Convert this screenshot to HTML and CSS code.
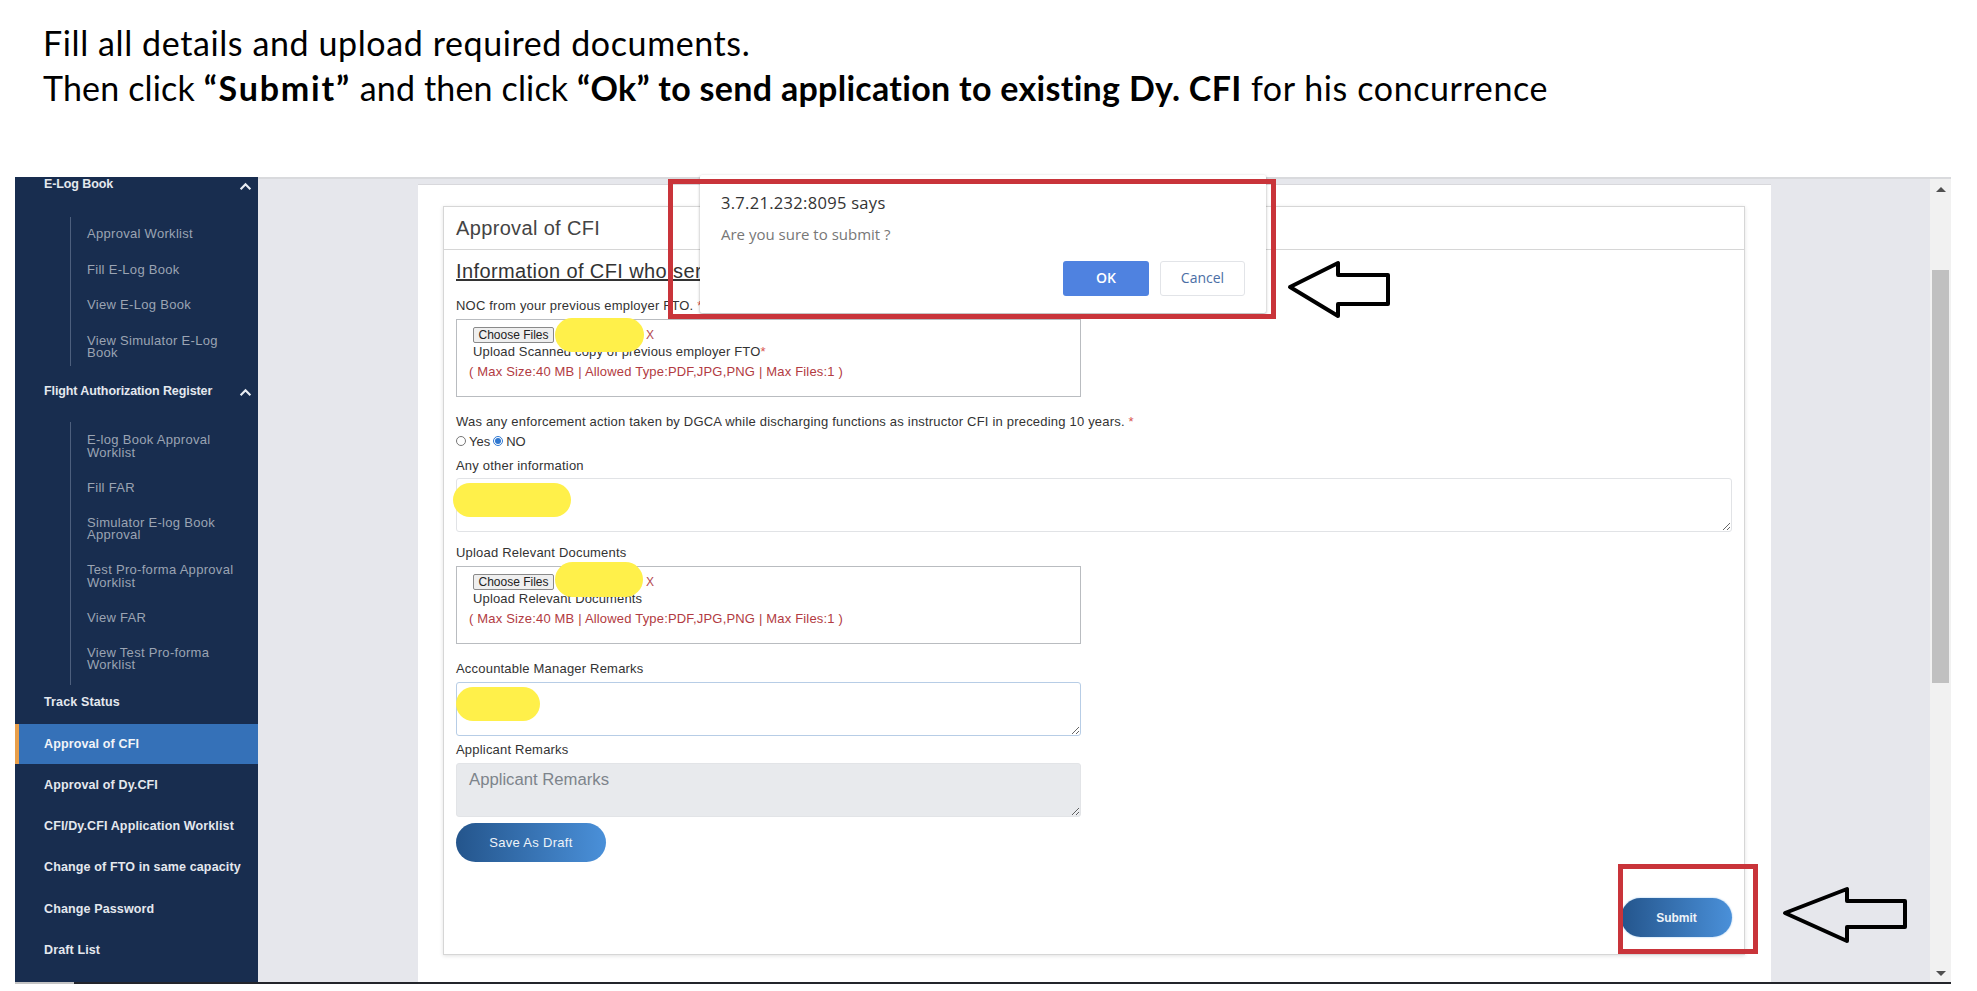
FILE: index.html
```html
<!DOCTYPE html>
<html lang="en">
<head>
<meta charset="utf-8">
<title>Approval of CFI</title>
<link rel="stylesheet" href="styles.css">
</head>
<body>
<div class="page">
  <header class="intro">
    <p>Fill all details and upload required documents.</p>
    <p><span class="then">Then click </span><b class="word">“Submit”</b><span class="then"> and then click </span><b class="phrase">“Ok” to send application to existing Dy. CFI</b> for his concurrence</p>
  </header>

  <div class="shot">
    <nav class="sidebar">
      <div class="top group first">E-Log Book <svg class="chev" viewBox="0 0 12 8"><path d="M1.5 6.5 6 2l4.5 4.5"/></svg></div>
      <ul class="sub s1">
        <li>Approval Worklist</li>
        <li>Fill E-Log Book</li>
        <li>View E-Log Book</li>
        <li>View Simulator E-Log Book</li>
      </ul>
      <div class="top group">Flight Authorization Register <svg class="chev" viewBox="0 0 12 8"><path d="M1.5 6.5 6 2l4.5 4.5"/></svg></div>
      <ul class="sub s2">
        <li>E-log Book Approval Worklist</li>
        <li>Fill FAR</li>
        <li>Simulator E-log Book Approval</li>
        <li>Test Pro-forma Approval Worklist</li>
        <li>View FAR</li>
        <li>View Test Pro-forma Worklist</li>
      </ul>
      <div class="top track">Track Status</div>
      <div class="top active">Approval of CFI</div>
      <div class="top">Approval of Dy.CFI</div>
      <div class="top">CFI/Dy.CFI Application Worklist</div>
      <div class="top">Change of FTO in same capacity</div>
      <div class="top">Change Password</div>
      <div class="top">Draft List</div>
    </nav>

    <main class="main">
      <div class="card">
        <section class="panel">
          <h2 class="panel-title">Approval of CFI</h2>
          <div class="panel-body">
            <h3 class="info">Information of CFI who served</h3>

            <label class="lbl g15">NOC from your previous employer FTO. <span class="req">*</span></label>
            <div class="filebox g6">
              <div class="fileline"><button class="choose" type="button">Choose Files</button><span class="x">X</span></div>
              <div class="hint">Upload Scanned copy of previous employer FTO<span class="req">*</span></div>
              <div class="limits">( Max Size:40 MB | Allowed Type:PDF,JPG,PNG | Max Files:1 )</div>
            </div>

            <label class="lbl g16">Was any enforcement action taken by DGCA while discharging functions as instructor CFI in preceding 10 years. <span class="req">*</span></label>
            <div class="radios g4">
              <input type="radio" name="enf" aria-label="Yes"><span>Yes</span>
              <input type="radio" name="enf" aria-label="NO" checked><span>NO</span>
            </div>

            <label class="lbl g8">Any other information</label>
            <textarea class="area wide g5" aria-label="Any other information"></textarea>

            <label class="lbl g12">Upload Relevant Documents</label>
            <div class="filebox g6">
              <div class="fileline"><button class="choose" type="button">Choose Files</button><span class="x">X</span></div>
              <div class="hint">Upload Relevant Documents</div>
              <div class="limits">( Max Size:40 MB | Allowed Type:PDF,JPG,PNG | Max Files:1 )</div>
            </div>

            <label class="lbl g16">Accountable Manager Remarks</label>
            <textarea class="area half focus g6" aria-label="Accountable Manager Remarks"></textarea>

            <label class="lbl g5">Applicant Remarks</label>
            <textarea class="area half off g6" placeholder="Applicant Remarks" disabled></textarea>

            <button class="pill draft" type="button">Save As Draft</button>
            <div class="submit-row"><button class="pill submit" type="button">Submit</button></div>
          </div>
        </section>
      </div>
    </main>

    <aside class="scroll">
      <span class="tri up"></span>
      <span class="thumb"></span>
      <span class="tri down"></span>
    </aside>
  </div>

  <div class="blob b1"></div>
  <div class="blob b2"></div>
  <div class="blob b3"></div>
  <div class="blob b4"></div>

  <div class="dialog">
    <div class="d-title">3.7.21.232:8095 says</div>
    <div class="d-msg">Are you sure to submit ?</div>
    <div class="d-actions">
      <button class="d-ok" type="button">OK</button>
      <button class="d-cancel" type="button">Cancel</button>
    </div>
  </div>

  <div class="redbox r1"></div>
  <div class="redbox r2"></div>

  <svg class="arrow a1" viewBox="0 0 104 58"><path d="M3 27 51 3v12h50v29H51v12z"/></svg>
  <svg class="arrow a2" viewBox="0 0 127 58"><path d="M3 27 65 3v12h58v26H65v14z"/></svg>
</div>
</body>
</html>
```
FILE: styles.css
```css
* { box-sizing: border-box; }
html, body { margin: 0; padding: 0; background: #fff; }
body { font-family: "Liberation Sans", Arial, sans-serif; color: #212529; overflow: hidden; }
.page { position: relative; width: 1977px; height: 991px; overflow: hidden; }

.intro { height: 177px; padding: 20px 0 0 43px; font-family: Lato, "Open Sans", sans-serif; font-size: 34px; line-height: 45px; color: #000; letter-spacing: 0.6px; }
.intro p { margin: 0; white-space: nowrap; }
.intro b { font-weight: 700; }
.then { letter-spacing: 0.15px; }
.word { letter-spacing: 1.8px; }
.phrase { letter-spacing: 0.3px; }

.shot { display: flex; margin-left: 15px; width: 1936px; height: 807px; border-bottom: 2px solid #23252b; border-image: linear-gradient(90deg, #c4c4c4 60px, #23252b 60px) 1; }

.sidebar { width: 243px; flex: none; background: #182d4f; overflow: hidden; }
.top { position: relative; height: 41.4px; padding-left: 29px; display: flex; align-items: center; font-size: 12.5px; color: #e4e8ee; font-weight: 700; letter-spacing: 0.13px; white-space: nowrap; }
.group.first { height: 14px; align-items: flex-end; }
.group { height: 26px; letter-spacing: -0.1px; }
.chev { position: absolute; right: 6px; top: 50%; width: 13px; height: 9px; margin-top: -3px; fill: none; stroke: #e8ecf2; stroke-width: 2; }
.group.first .chev { top: 5px; margin-top: 0; }
.sub { list-style: none; margin: 0 0 0 55px; padding: 0; border-left: 1px solid #4d5f7d; color: #9ba4b3; }
.sub li { padding: 10px 8px 13px 16px; line-height: 12.5px; font-size: 13px; letter-spacing: 0.3px; width: 175px; }
.s1 { margin-top: 26px; margin-bottom: 12px; height: 149px; padding-top: 1px; }
.s2 { margin-top: 18px; height: 263px; padding-top: 2px; }
.s2 li { padding-bottom: 12.5px; }
.track { height: 39px; padding-bottom: 5px; }
.active { background: #3571b8; border-left: 4px solid #e89f4b; padding-left: 25px; height: 40px; color: #f1f4f8; }

.main { width: 1672px; flex: none; background: #e6e7ec; border-top: 2px solid #d9dadd; padding: 6px 160px 0 160px; }
.card { width: 1353px; height: 100%; background: #fff; padding: 21px 26px 0 25px; box-shadow: 0 -1px 0 #d8d8dc; }
.panel { height: 749px; border: 1px solid #d6d6d6; box-shadow: 0 1px 4px rgba(0,0,0,.12); background: #fff; }
.panel-title { margin: 0; height: 43px; padding: 0 12px; display: flex; align-items: center; font-size: 20px; letter-spacing: 0.35px; font-weight: 400; color: #444; border-bottom: 1px solid #d6d6d6; }
.panel-body { padding: 10px 12px 0; }
.info { margin: 0; height: 22px; line-height: 22px; font-size: 20px; letter-spacing: 0.4px; font-weight: 400; color: #333; text-decoration: underline; white-space: nowrap; }

.lbl { display: block; height: 16px; line-height: 17px; font-size: 13px; letter-spacing: 0.2px; color: #333; white-space: nowrap; }
.req { color: #d9534f; }
.g4 { margin-top: 4px; } .g5 { margin-top: 5px; } .g6 { margin-top: 6px; } .g8 { margin-top: 8px; }
.g12 { margin-top: 12px; } .g15 { margin-top: 15px; } .g16 { margin-top: 16px; }

.filebox { width: 625px; height: 78px; border: 1px solid #b9bcc0; padding: 7px 0 0 16px; color: #333; }
.fileline { display: flex; align-items: center; height: 16px; }
.choose { width: 81px; height: 16px; padding: 0; font: 12px "Liberation Sans", Arial, sans-serif; color: #222; background: #efefef; border: 1px solid #8a8a8a; border-radius: 2px; }
.x { margin-left: 92px; color: #b5484e; font-size: 12px; }
.hint { height: 16px; line-height: 16px; font-size: 13px; letter-spacing: 0.15px; margin-top: 1px; white-space: nowrap; }
.limits { margin: 4px 0 0 -4px; height: 16px; line-height: 16px; font-size: 13px; letter-spacing: 0.18px; color: #b23b42; white-space: nowrap; }

.radios { display: flex; align-items: center; height: 16px; font-size: 13px; color: #333; }
.radios input { margin: 0 3px 0 0; width: 10px; height: 10px; accent-color: #2f77d0; }
.radios span { margin-right: 3px; }

.area { display: block; height: 54px; padding: 6px 12px; background: #fff; border: 1px solid #e1e3e6; border-radius: 3px; font: 16.7px "Liberation Sans", Arial, sans-serif; color: #666; outline: 0; }
.wide { width: 1276px; }
.half { width: 625px; }
.focus { border-color: #b7cde6; }
.off { background: #e8eaed; border-color: #e2e4e7; }
.off::placeholder { color: #7d848b; opacity: 1; }

.pill { display: block; border: 0; border-radius: 20px; color: #eef3f8; font: 13px "Liberation Sans", Arial, sans-serif; letter-spacing: 0.3px; background: linear-gradient(90deg, #24558c, #4a90d9); }
.draft { margin-top: 6px; width: 150px; height: 39px; }
.submit-row { display: flex; justify-content: flex-end; margin-top: 36px; }
.submit { width: 111px; height: 39px; font-size: 12px; font-weight: 700; letter-spacing: 0; box-shadow: 0 0 2px #8fc1ee; }

.scroll { position: relative; width: 21px; flex: none; background: #f1f1f1; display: flex; flex-direction: column; align-items: center; border-top: 2px solid #d9dadd; }
.thumb { width: 17px; height: 413px; margin-top: 78px; background: #c0c0c0; }
.tri { width: 0; height: 0; border-left: 5px solid transparent; border-right: 5px solid transparent; }
.up { margin-top: 8px; border-bottom: 5px solid #505050; }
.down { margin-top: auto; margin-bottom: 6px; border-top: 5px solid #505050; }

.blob { position: absolute; background: #fff04a; border-radius: 999px; }
.b1 { left: 555px; top: 318px; width: 89px; height: 34px; }
.b2 { left: 453px; top: 483px; width: 118px; height: 34px; }
.b3 { left: 555px; top: 562px; width: 88px; height: 35px; }
.b4 { left: 456px; top: 687px; width: 84px; height: 34px; }

.dialog { position: absolute; left: 700px; top: 175px; width: 566px; height: 138px; padding: 20px 21px 0; background: #fff; border-radius: 2px; box-shadow: 0 1px 3px rgba(0,0,0,.35); font-family: "Open Sans", sans-serif; }
.d-title { height: 16px; line-height: 16px; font-size: 16.5px; letter-spacing: 0.3px; color: #333; white-space: nowrap; }
.d-msg { margin-top: 15px; height: 16px; line-height: 16px; font-size: 15px; color: #777; white-space: nowrap; }
.d-actions { display: flex; justify-content: flex-end; gap: 11px; margin-top: 19px; }
.d-ok, .d-cancel { width: 86px; height: 35px; padding: 0 0 2px; border-radius: 3px; font: 600 14px "Open Sans", sans-serif; }
.d-ok { background: #4f82e0; border: 0; color: #fff; }
.d-cancel { width: 85px; background: #fff; border: 1px solid #e2e4e8; color: #4a6ea5; font-weight: 400; }

.redbox { position: absolute; border: 5px solid #c9343a; }
.r1 { left: 668px; top: 179px; width: 608px; height: 140px; }
.r2 { left: 1618px; top: 864px; width: 140px; height: 90px; }

.arrow { position: absolute; fill: none; stroke: #000; stroke-width: 4; stroke-linejoin: round; }
.a1 { left: 1287px; top: 260px; width: 104px; height: 58px; }
.a2 { left: 1782px; top: 886px; width: 127px; height: 58px; }
```
